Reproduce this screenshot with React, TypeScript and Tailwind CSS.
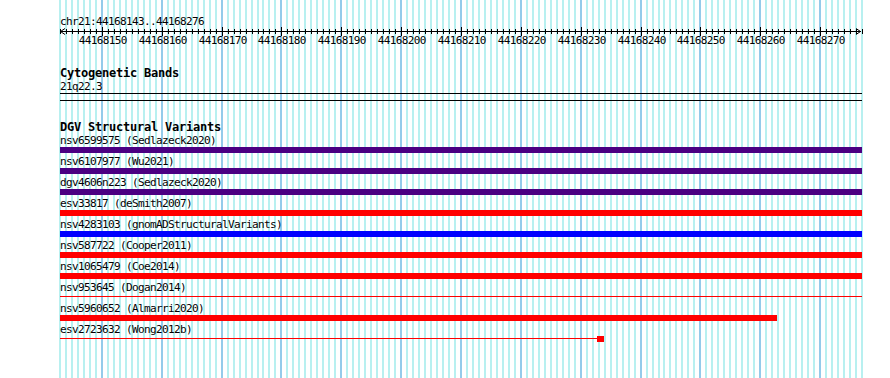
import React from 'react';

const START = 44168143;
const END = 44168276;
const LEFT = 60;
const PX = 802 / (END - START + 1); // pixels per base
const xOf = (b: number) => LEFT + (b - START) * PX;

type Variant = {
  label: string;
  color: string;
  end: number;
  kind: 'bar' | 'line';
  tail?: boolean;
};

const variants: Variant[] = [
  { label: 'nsv6599575 (Sedlazeck2020)', color: '#4b0082', end: END + 1, kind: 'bar' },
  { label: 'nsv6107977 (Wu2021)', color: '#4b0082', end: END + 1, kind: 'bar' },
  { label: 'dgv4606n223 (Sedlazeck2020)', color: '#4b0082', end: END + 1, kind: 'bar' },
  { label: 'esv33817 (deSmith2007)', color: '#ff0000', end: END + 1, kind: 'bar' },
  { label: 'nsv4283103 (gnomADStructuralVariants)', color: '#0000ff', end: END + 1, kind: 'bar' },
  { label: 'nsv587722 (Cooper2011)', color: '#ff0000', end: END + 1, kind: 'bar' },
  { label: 'nsv1065479 (Coe2014)', color: '#ff0000', end: END + 1, kind: 'bar' },
  { label: 'nsv953645 (Dogan2014)', color: '#ff0000', end: END + 1, kind: 'line' },
  { label: 'nsv5960652 (Almarri2020)', color: '#ff0000', end: 44168262.75, kind: 'bar' },
  { label: 'esv2723632 (Wong2012b)', color: '#ff0000', end: 44168232.7, kind: 'line', tail: true },
];

function Grid() {
  const lines = [];
  for (let b = START; b <= END + 1; b++) {
    const x = Math.round(xOf(b));
    const major = b % 10 === 0;
    lines.push(
      <rect key={b} x={x - 1} y={0} width={2} height={378} fill={major ? '#94cbea' : '#b8f0f0'} />
    );
  }
  return (
    <svg className="absolute left-0 top-0 pointer-events-none" width={890} height={378}>
      {lines}
    </svg>
  );
}

function Ruler() {
  const ticks = [];
  const labels = [];
  for (let b = START; b <= END + 1; b++) {
    const x = Math.round(xOf(b) - LEFT) + 0.5;
    const major = b % 10 === 0;
    ticks.push(
      <line key={b} x1={x} x2={x} y1={major ? -1 : 1} y2={major ? 8 : 6} stroke="#000" strokeWidth={1} />
    );
    if (major) {
      labels.push(
        <text key={'t' + b} x={x + 0.3} y={16} textAnchor="middle" fontSize={11} letterSpacing={-0.62} fill="#000">
          {b}
        </text>
      );
    }
  }
  return (
    <svg width={802} height={20} className="block overflow-visible">
      <line x1={0} x2={801} y1={3.5} y2={3.5} stroke="#000" strokeWidth={1} />
      <polyline points="5,0.5 0.5,3.5 5,6.5" fill="none" stroke="#000" strokeWidth={1} />
      <polyline points="796,0.5 800.5,3.5 796,6.5" fill="none" stroke="#000" strokeWidth={1} />
      {ticks}
      {labels}
    </svg>
  );
}

function VariantRow({ v }: { v: Variant }) {
  const width = Math.round(xOf(v.end) - LEFT);
  return (
    <div className="h-[21px]">
      <div className="h-[12px] leading-[12px] text-[11px] tracking-[-0.62px] whitespace-nowrap">{v.label}</div>
      <div className="h-[6px] flex items-start">
        {v.kind === 'bar' ? (
          <div className="h-[6px]" style={{ width, backgroundColor: v.color }} />
        ) : (
          <>
            <div className="mt-[2px] h-px" style={{ width, backgroundColor: v.color }} />
            {v.tail && <div className="h-[6px] w-[7px]" style={{ backgroundColor: v.color }} />}
          </>
        )}
      </div>
    </div>
  );
}

export default function App() {
  return (
    <div className="relative w-[890px] h-[378px] bg-white overflow-hidden text-black font-['DejaVu_Sans_Mono','Liberation_Mono',monospace]">
      <Grid />
      <div className="relative pl-[60px] w-[862px]">
        <div className="pt-[16px] h-[28px] leading-[12px] text-[11px] tracking-[-0.62px]">chr21:44168143..44168276</div>
        <Ruler />

        <div className="mt-[19px] h-[13px] leading-[13px] text-[12px] tracking-[-0.22px] font-bold">Cytogenetic Bands</div>
        <div className="mt-[1px] h-[12px] leading-[12px] text-[11px] tracking-[-0.62px]">21q22.3</div>
        <div className="h-px bg-black" />
        <div className="mt-[6px] h-px bg-black" />

        <div className="mt-[20px] h-[13px] leading-[13px] text-[12px] tracking-[-0.22px] font-bold">DGV Structural Variants</div>
        <div className="mt-[1px]">
          {variants.map((v) => (
            <VariantRow key={v.label} v={v} />
          ))}
        </div>
      </div>
    </div>
  );
}
